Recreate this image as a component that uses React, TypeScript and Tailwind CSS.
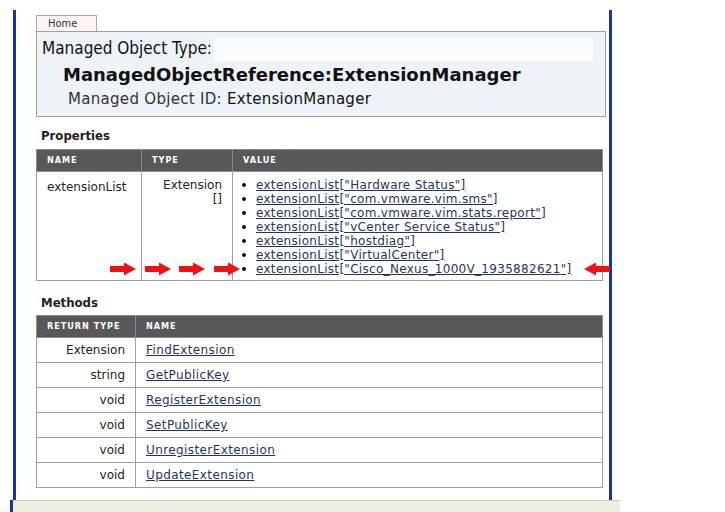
const font = { fontFamily: '"DejaVu Sans Condensed", "DejaVu Sans", Verdana, sans-serif' };
const wide = { fontFamily: '"DejaVu Sans", Verdana, sans-serif' };

const extensions = [
  "Hardware Status",
  "com.vmware.vim.sms",
  "com.vmware.vim.stats.report",
  "vCenter Service Status",
  "hostdiag",
  "VirtualCenter",
  "Cisco_Nexus_1000V_1935882621",
];

const methods = [
  { ret: "Extension", name: "FindExtension" },
  { ret: "string", name: "GetPublicKey" },
  { ret: "void", name: "RegisterExtension" },
  { ret: "void", name: "SetPublicKey" },
  { ret: "void", name: "UnregisterExtension" },
  { ret: "void", name: "UpdateExtension" },
];

const Arrow = ({ left, flip }: { left: number; flip?: boolean }) => (
  <svg
    width="28"
    height="14"
    viewBox="0 0 28 14"
    className="absolute"
    style={{ left, top: 0, transform: flip ? "scaleX(-1)" : undefined }}
  >
    <path d="M1 4 H15 V0.5 L27 7 L15 13.5 V10 H1 Z" fill="#f21010" />
  </svg>
);

export default function App() {
  return (
    <div className="w-[725px] h-[512px] bg-white overflow-hidden flex flex-col" style={font}>
      <div className="flex-1 flex">
        <div className="w-[13px]" />
        <div className="w-[599px] mt-[10px] border-l-[3px] border-r-[3px] border-[#1b3890] pl-[20px] pr-[3px] pt-[5px]">
          {/* header box */}
          <div className="w-[61px] h-[16px] border border-b-0 border-[#a9a9a9] bg-[#fdf3f2] text-[11px] leading-[15px] text-[#333] pl-[11px]">
            Home
          </div>
          <div className="h-[86px] border border-[#a0a0a0] bg-[#eef3f8] pl-[5px] pr-[12px] pt-[5px]">
            <div className="flex items-center h-[24px]">
              <span className="text-[17px] text-[#111]">Managed Object Type:</span>
              <span className="flex-1 h-[23px] bg-[#fafcfe] ml-[2px]" />
            </div>
            <div className="pl-[21px] mt-[3px] text-[18px] font-bold text-[#111] leading-[22px]" style={wide}>
              ManagedObjectReference:ExtensionManager
            </div>
            <div className="pl-[26px] mt-[4px] text-[15px] leading-[18px] text-[#333] tracking-[0.3px]" style={wide}>
              Managed Object ID: <span className="text-[#111]">ExtensionManager</span>
            </div>
          </div>

          {/* properties */}
          <div className="mt-[11px] pl-[5px] text-[13px] font-bold text-[#222] leading-[16px]">Properties</div>
          <table className="mt-[5px] w-[567px] border-collapse text-[12px] text-[#222] tracking-[0.3px]" style={wide}>
            <thead>
              <tr className="bg-[#58585a] text-white text-[9px] font-bold tracking-[1px] h-[22px] text-left" style={font}>
                <th className="w-[105px] pl-[10px] border border-[#8a8a8a]">NAME</th>
                <th className="w-[91px] pl-[10px] border border-[#8a8a8a]">TYPE</th>
                <th className="pl-[10px] border border-[#8a8a8a]">VALUE</th>
              </tr>
            </thead>
            <tbody>
              <tr className="align-top">
                <td className="border border-[#a0a0a0] pl-[10px] pt-[6px] h-[109px] tracking-normal">extensionList</td>
                <td className="border border-[#a0a0a0] pr-[10px] pt-[6px] text-right leading-[14px] tracking-normal">
                  Extension
                  <br />
                  []
                </td>
                <td className="border border-[#a0a0a0] pt-[6px] pl-[9px]">
                  <ul className="leading-[14px]">
                    {extensions.map((e, i) => (
                      <li key={e} className="flex items-center relative">
                        <span className="w-[4px] h-[4px] rounded-full bg-[#111] mr-[10px]" />
                        <a className="underline text-[#1f3565]">extensionList["{e}"]</a>
                        {i === extensions.length - 1 && (
                          <>
                            <Arrow left={-133} />
                            <Arrow left={-98} />
                            <Arrow left={-64} />
                            <Arrow left={-29} />
                            <Arrow left={341} flip />
                          </>
                        )}
                      </li>
                    ))}
                  </ul>
                </td>
              </tr>
            </tbody>
          </table>

          {/* methods */}
          <div className="mt-[14px] pl-[5px] text-[13px] font-bold text-[#222] leading-[16px]">Methods</div>
          <table className="mt-[4px] w-[567px] border-collapse text-[12px] text-[#222] tracking-[0.4px]" style={wide}>
            <thead>
              <tr className="bg-[#58585a] text-white text-[9px] font-bold tracking-[1px] h-[22px] text-left" style={font}>
                <th className="w-[99px] pl-[10px] border border-[#8a8a8a]">RETURN TYPE</th>
                <th className="pl-[10px] border border-[#8a8a8a]">NAME</th>
              </tr>
            </thead>
            <tbody>
              {methods.map((m) => (
                <tr key={m.name} className="h-[25px]">
                  <td className="border border-[#a0a0a0] text-right pr-[10px] tracking-normal">{m.ret}</td>
                  <td className="border border-[#a0a0a0] pl-[10px]">
                    <a className="underline text-[#1f3565]">{m.name}</a>
                  </td>
                </tr>
              ))}
            </tbody>
          </table>
        </div>
      </div>
      <div className="h-[12px] flex">
        <div className="w-[10px]" />
        <div className="w-[3px] bg-[#1b3890]" />
        <div className="w-[607px] bg-[#efede2] border-t border-[#cfcbbb]" />
      </div>
    </div>
  );
}
